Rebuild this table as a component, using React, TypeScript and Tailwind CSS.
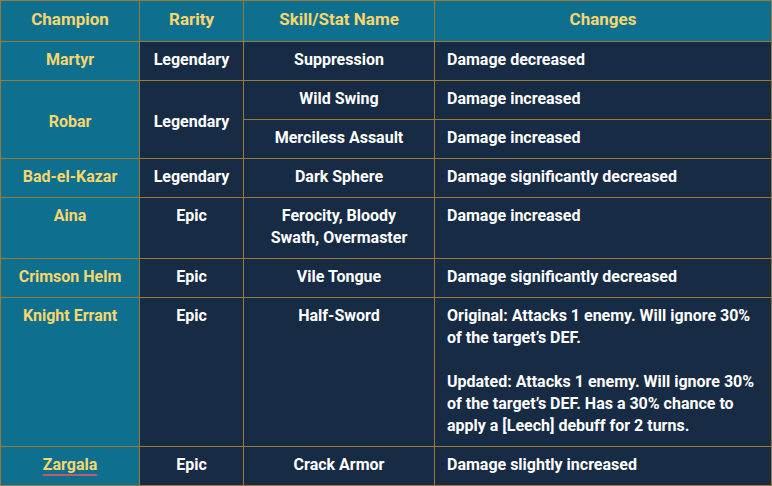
import React from 'react';

const gold = 'text-[#f6d66e]';

// 行数据
const rows = [
  { name: 'Martyr', rarity: 'Legendary', skill: 'Suppression', change: 'Damage decreased' },
  { name: 'Bad-el-Kazar', rarity: 'Legendary', skill: 'Dark Sphere', change: 'Damage significantly decreased' },
];

const cell = 'border border-[#9d7a34] px-3 pt-[7px] pb-[9px] align-top leading-[22px]';
const teal = 'bg-[#0f6f8f]';
const dark = 'bg-[#172b45]';

export default function App() {
  return (
    <div className="w-[772px] h-[486px] bg-[#172b45] font-['Roboto',_'Liberation_Sans',_sans-serif] font-bold text-[16px] text-white">
      <table className="w-[772px] border-collapse table-fixed">
        <colgroup>
          <col className="w-[139px]" />
          <col className="w-[104px]" />
          <col className="w-[191px]" />
          <col />
        </colgroup>
        <thead>
          <tr className={`${teal} h-[41px]`}>
            {['Champion', 'Rarity', 'Skill/Stat Name', 'Changes'].map(h => (
              <th key={h} className={`border border-[#9d7a34] text-center align-middle text-[17px] pb-[3px] ${gold}`}>{h}</th>
            ))}
          </tr>
        </thead>
        <tbody>
          <tr className="h-[39px]">
            <td className={`${cell} ${teal} ${gold} text-center`}>Martyr</td>
            <td className={`${cell} ${dark} text-center`}>Legendary</td>
            <td className={`${cell} ${dark} text-center`}>Suppression</td>
            <td className={`${cell} ${dark}`}>Damage decreased</td>
          </tr>
          <tr className="h-[39px]">
            <td rowSpan={2} className={`${cell} ${teal} ${gold} text-center !align-middle !pt-[11px] !pb-[7px]`}>Robar</td>
            <td rowSpan={2} className={`${cell} ${dark} text-center !align-middle !pt-[11px] !pb-[7px]`}>Legendary</td>
            <td className={`${cell} ${dark} text-center`}>Wild Swing</td>
            <td className={`${cell} ${dark}`}>Damage increased</td>
          </tr>
          <tr className="h-[39px]">
            <td className={`${cell} ${dark} text-center`}>Merciless Assault</td>
            <td className={`${cell} ${dark}`}>Damage increased</td>
          </tr>
          <tr className="h-[39px]">
            <td className={`${cell} ${teal} ${gold} text-center`}>{rows[1].name}</td>
            <td className={`${cell} ${dark} text-center`}>{rows[1].rarity}</td>
            <td className={`${cell} ${dark} text-center`}>{rows[1].skill}</td>
            <td className={`${cell} ${dark}`}>{rows[1].change}</td>
          </tr>
          <tr className="h-[61px]">
            <td className={`${cell} ${teal} ${gold} text-center`}>Aina</td>
            <td className={`${cell} ${dark} text-center`}>Epic</td>
            <td className={`${cell} ${dark} text-center !pb-[8px]`}>Ferocity, Bloody Swath, Overmaster</td>
            <td className={`${cell} ${dark}`}>Damage increased</td>
          </tr>
          <tr className="h-[39px]">
            <td className={`${cell} ${teal} ${gold} text-center`}>Crimson Helm</td>
            <td className={`${cell} ${dark} text-center`}>Epic</td>
            <td className={`${cell} ${dark} text-center`}>Vile Tongue</td>
            <td className={`${cell} ${dark}`}>Damage significantly decreased</td>
          </tr>
          <tr className="h-[149px]">
            <td className={`${cell} ${teal} ${gold} text-center`}>Knight Errant</td>
            <td className={`${cell} ${dark} text-center`}>Epic</td>
            <td className={`${cell} ${dark} text-center`}>Half-Sword</td>
            <td className={`${cell} ${dark}`}>
              <p>Original: Attacks 1 enemy. Will ignore 30% of the target’s DEF.</p>
              <p className="mt-[22px]">Updated: Attacks 1 enemy. Will ignore 30% of the target’s DEF. Has a 30% chance to apply a [Leech] debuff for 2 turns.</p>
            </td>
          </tr>
          <tr className="h-[39px]">
            <td className={`${cell} ${teal} ${gold} text-center`}>
              <span className="underline decoration-[#c25a6c] decoration-2 underline-offset-[4px]">Zargala</span>
            </td>
            <td className={`${cell} ${dark} text-center`}>Epic</td>
            <td className={`${cell} ${dark} text-center`}>Crack Armor</td>
            <td className={`${cell} ${dark}`}>Damage slightly increased</td>
          </tr>
        </tbody>
      </table>
    </div>
  );
}
